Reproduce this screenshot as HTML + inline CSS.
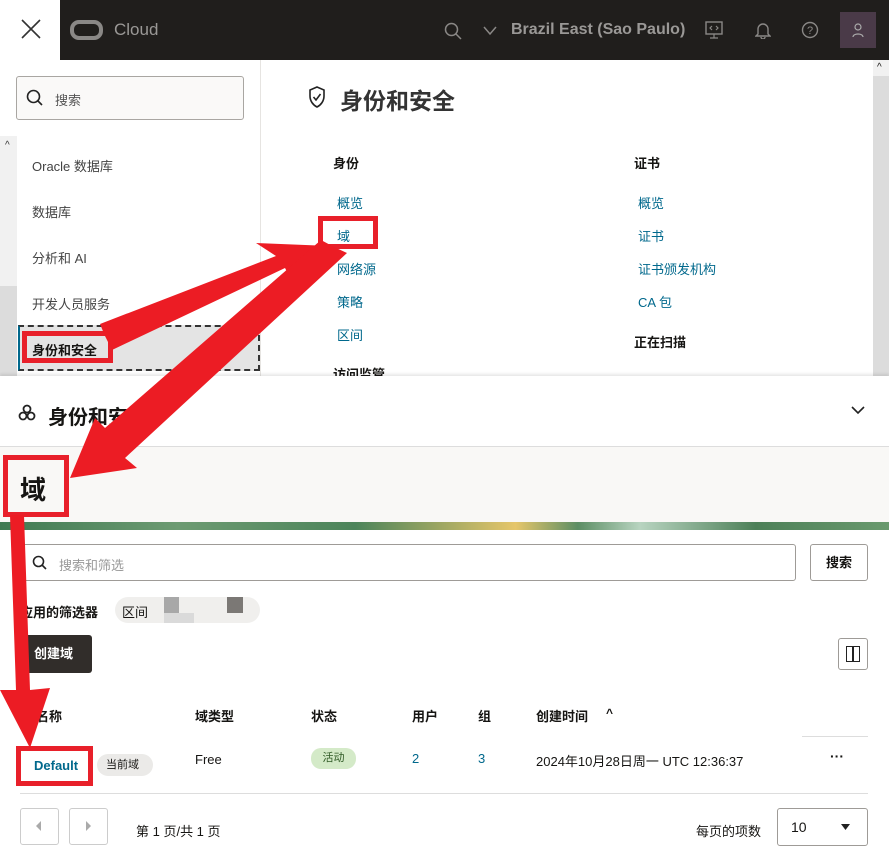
<!DOCTYPE html>
<html><head><meta charset="utf-8"><style>
*{box-sizing:border-box;margin:0;padding:0}
body{width:889px;height:852px;position:relative;overflow:hidden;background:#fff;font-family:"Liberation Sans","Noto Sans CJK SC",sans-serif;color:#161513}
.a{position:absolute;white-space:nowrap}
.link{color:#00688c;font-size:13px}
</style></head><body>
<!-- top bar -->
<div class="a" style="left:0;top:0;width:60px;height:60px;background:#fff"></div>
<svg class="a" style="left:20px;top:18px" width="22" height="22"><path d="M2 2L20 20M20 2L2 20" stroke="#333" stroke-width="1.6"/></svg>
<div class="a" style="left:60px;top:0;width:829px;height:60px;background:#201e1c"></div>
<div class="a" style="left:70px;top:20px;width:33px;height:20px;border:4px solid #8a8886;border-radius:9px"></div>
<div class="a" style="left:114px;top:20px;color:#9a9896;font-size:17px">Cloud</div>
<svg class="a" style="left:444px;top:22px" width="18" height="18"><circle cx="7.5" cy="7.5" r="6" fill="none" stroke="#8a8886" stroke-width="1.5"/><path d="M12 12l5 5" stroke="#8a8886" stroke-width="1.5"/></svg>
<svg class="a" style="left:483px;top:26px" width="14" height="10"><path d="M1 1l6 7 6-7" fill="none" stroke="#8a8886" stroke-width="1.5"/></svg>
<div class="a" style="left:511px;top:21px;color:#9a9896;font-size:16px;font-weight:bold">Brazil East (Sao Paulo)</div>
<svg class="a" style="left:705px;top:21px" width="18" height="18"><rect x="1" y="1" width="16" height="12" fill="none" stroke="#8a8886" stroke-width="1.4"/><path d="M9 13v4M5 17h8M7 5l-2 2 2 2M11 5l2 2-2 2" fill="none" stroke="#8a8886" stroke-width="1.2"/></svg>
<svg class="a" style="left:755px;top:21px" width="16" height="18"><path d="M3 13V8a5 5 0 0110 0v5l2 2H1z M6 16a2 2 0 004 0" fill="none" stroke="#8a8886" stroke-width="1.4"/></svg>
<svg class="a" style="left:801px;top:21px" width="18" height="18"><circle cx="9" cy="9" r="7.5" fill="none" stroke="#8a8886" stroke-width="1.4"/><text x="9" y="13" font-size="11" text-anchor="middle" fill="#8a8886" font-family="Liberation Sans">?</text></svg>
<div class="a" style="left:840px;top:12px;width:36px;height:36px;background:#4a3a48"></div>
<svg class="a" style="left:851px;top:22px" width="14" height="16"><circle cx="7" cy="5" r="3" fill="none" stroke="#aaa" stroke-width="1.2"/><path d="M2 15c0-4 10-4 10 0" fill="none" stroke="#aaa" stroke-width="1.2"/></svg>

<!-- left panel -->
<div class="a" style="left:260px;top:60px;width:1px;height:317px;background:#e6e4e1"></div>
<div class="a" style="left:16px;top:76px;width:228px;height:44px;border:1px solid #a9a6a2;border-radius:3px;background:#faf9f8"></div>
<svg class="a" style="left:26px;top:89px" width="18" height="18"><circle cx="7.5" cy="7.5" r="6" fill="none" stroke="#222" stroke-width="1.6"/><path d="M12 12l4 4" stroke="#222" stroke-width="1.6"/></svg>
<div class="a" style="left:55px;top:90px;font-size:13px;color:#555">搜索</div>
<div class="a" style="left:0;top:136px;width:17px;height:150px;background:#f1f1f1"></div>
<div class="a" style="left:0;top:286px;width:17px;height:90px;background:#dcdcdc"></div>
<div class="a" style="left:5px;top:140px;font-size:10px;color:#333">^</div>
<div class="a" style="left:32px;top:156px;font-size:13px;color:#444">Oracle 数据库</div>
<div class="a" style="left:32px;top:202px;font-size:13px;color:#444">数据库</div>
<div class="a" style="left:32px;top:248px;font-size:13px;color:#444">分析和 AI</div>
<div class="a" style="left:32px;top:294px;font-size:13px;color:#444">开发人员服务</div>
<div class="a" style="left:18px;top:325px;width:242px;height:46px;background:#e4e4e4;border:2px dashed #333;border-left:2px solid #00688c"></div>
<div class="a" style="left:32px;top:340px;font-size:13px;font-weight:bold">身份和安全</div>

<!-- right menu panel -->
<svg class="a" style="left:308px;top:86px" width="18" height="22"><path d="M9 1L2 4v6c0 5 3 9 7 11 4-2 7-6 7-11V4z" fill="none" stroke="#222" stroke-width="1.6"/><path d="M5.5 11l2.5 3 4.5-6" fill="none" stroke="#222" stroke-width="1.6"/></svg>
<div class="a" style="left:340px;top:82px;font-size:23px;font-weight:bold;color:#333">身份和安全</div>
<div class="a" style="left:333px;top:153px;font-size:13px;font-weight:bold">身份</div>
<div class="a link" style="left:337px;top:193px">概览</div>
<div class="a link" style="left:337px;top:226px">域</div>
<div class="a link" style="left:337px;top:259px">网络源</div>
<div class="a link" style="left:337px;top:292px">策略</div>
<div class="a link" style="left:337px;top:325px">区间</div>
<div class="a" style="left:333px;top:364px;font-size:13px;font-weight:bold">访问监管</div>
<div class="a" style="left:634px;top:153px;font-size:13px;font-weight:bold">证书</div>
<div class="a link" style="left:638px;top:193px">概览</div>
<div class="a link" style="left:638px;top:226px">证书</div>
<div class="a link" style="left:638px;top:259px">证书颁发机构</div>
<div class="a link" style="left:638px;top:292px">CA 包</div>
<div class="a" style="left:634px;top:332px;font-size:13px;font-weight:bold">正在扫描</div>
<div class="a" style="left:873px;top:60px;width:16px;height:317px;background:#f1f1f1"></div>
<div class="a" style="left:873px;top:76px;width:16px;height:300px;background:#dcdcdc"></div>
<div class="a" style="left:877px;top:62px;font-size:10px">^</div>

<!-- bottom screenshot -->
<div class="a" style="left:0;top:376px;width:889px;height:476px;background:#fff;box-shadow:0 -2px 3px rgba(0,0,0,.1)"></div>
<svg class="a" style="left:18px;top:404px" width="18" height="18"><circle cx="9" cy="5" r="3.5" fill="none" stroke="#222" stroke-width="1.8"/><circle cx="5" cy="12" r="3.5" fill="none" stroke="#222" stroke-width="1.8"/><circle cx="13" cy="12" r="3.5" fill="none" stroke="#222" stroke-width="1.8"/></svg>
<div class="a" style="left:48px;top:401px;font-size:20px;font-weight:bold">身份和安全</div>
<svg class="a" style="left:851px;top:406px" width="14" height="10"><path d="M1 1l6 6 6-6" fill="none" stroke="#222" stroke-width="1.6"/></svg>
<div class="a" style="left:0;top:446px;width:889px;height:1px;background:#ddd"></div>
<div class="a" style="left:0;top:447px;width:889px;height:75px;background:#f9f8f6"></div>
<div class="a" style="left:20px;top:470px;font-size:26px;font-weight:bold">域</div>
<div class="a" style="left:0;top:522px;width:889px;height:8px;background:linear-gradient(90deg,#3f7a52,#6d9b72 20%,#4c845a 40%,#e6c66a 58%,#5c8e64 65%,#b8d4c0 72%,#4d8058 85%,#6a9a6e)"></div>
<div class="a" style="left:20px;top:544px;width:776px;height:37px;border:1px solid #9e9b97;border-radius:3px"></div>
<svg class="a" style="left:32px;top:555px" width="16" height="16"><circle cx="6.5" cy="6.5" r="5" fill="none" stroke="#222" stroke-width="1.6"/><path d="M10 10l4 4" stroke="#222" stroke-width="1.6"/></svg>
<div class="a" style="left:59px;top:555px;font-size:13px;color:#999">搜索和筛选</div>
<div class="a" style="left:810px;top:544px;width:58px;height:37px;border:1px solid #9e9b97;border-radius:3px;font-size:13px;font-weight:bold;text-align:center;line-height:35px">搜索</div>
<div class="a" style="left:20px;top:602px;font-size:13px;font-weight:bold">应用的筛选器</div>
<div class="a" style="left:115px;top:597px;width:145px;height:26px;border-radius:13px;background:#f0efed"></div>
<div class="a" style="left:122px;top:602px;font-size:13px">区间</div>
<div class="a" style="left:164px;top:597px;width:15px;height:16px;background:#a8a8a8"></div>
<div class="a" style="left:164px;top:613px;width:30px;height:10px;background:#dadada"></div>
<div class="a" style="left:227px;top:597px;width:16px;height:16px;background:#7b7875"></div>
<div class="a" style="left:18px;top:635px;width:74px;height:38px;background:#312d2a;border-radius:3px;color:#fff;font-size:13px;font-weight:bold;line-height:38px;padding-left:16px">创建域</div>
<div class="a" style="left:838px;top:638px;width:30px;height:32px;border:1px solid #9e9b97;border-radius:3px"></div>
<div class="a" style="left:846px;top:646px;width:14px;height:16px;border:1.5px solid #222"></div>
<div class="a" style="left:852px;top:646px;width:1.5px;height:16px;background:#222"></div>
<div class="a" style="left:36px;top:706px;font-size:13px;font-weight:bold">名称</div>
<div class="a" style="left:195px;top:706px;font-size:13px;font-weight:bold">域类型</div>
<div class="a" style="left:311px;top:706px;font-size:13px;font-weight:bold">状态</div>
<div class="a" style="left:412px;top:706px;font-size:13px;font-weight:bold">用户</div>
<div class="a" style="left:478px;top:706px;font-size:13px;font-weight:bold">组</div>
<div class="a" style="left:536px;top:706px;font-size:13px;font-weight:bold">创建时间</div>
<div class="a" style="left:606px;top:706px;font-size:12px;font-weight:bold">^</div>
<div class="a" style="left:802px;top:736px;width:66px;height:1px;background:#ddd"></div>
<div class="a" style="left:34px;top:758px;font-size:13px;font-weight:bold;color:#00688c">Default</div>
<div class="a" style="left:97px;top:754px;width:56px;height:22px;border-radius:11px;background:#ebeae8;font-size:11px;line-height:22px;padding-left:9px">当前域</div>
<div class="a" style="left:195px;top:752px;font-size:13px">Free</div>
<div class="a" style="left:311px;top:748px;width:45px;height:21px;border-radius:10px;background:#d4eac8;font-size:11px;line-height:21px;text-align:center;color:#2f5a25">活动</div>
<div class="a" style="left:412px;top:751px;font-size:13px;color:#00688c">2</div>
<div class="a" style="left:478px;top:751px;font-size:13px;color:#00688c">3</div>
<div class="a" style="left:536px;top:751px;font-size:13px">2024年10月28日周一 UTC 12:36:37</div>
<div class="a" style="left:830px;top:748px;font-size:14px;font-weight:bold">···</div>
<div class="a" style="left:20px;top:793px;width:848px;height:1px;background:#ddd"></div>
<div class="a" style="left:20px;top:808px;width:39px;height:37px;border:1px solid #ccc;border-radius:3px"></div>
<div class="a" style="left:69px;top:808px;width:39px;height:37px;border:1px solid #ccc;border-radius:3px"></div>
<svg class="a" style="left:36px;top:821px" width="6" height="10"><path d="M5 0L0 5l5 5z" fill="#aaa"/></svg>
<svg class="a" style="left:86px;top:821px" width="6" height="10"><path d="M0 0l5 5-5 5z" fill="#aaa"/></svg>
<div class="a" style="left:136px;top:821px;font-size:13px">第 1 页/共 1 页</div>
<div class="a" style="left:696px;top:821px;font-size:13px">每页的项数</div>
<div class="a" style="left:777px;top:808px;width:91px;height:38px;border:1px solid #9e9b97;border-radius:3px"></div>
<div class="a" style="left:791px;top:819px;font-size:14px">10</div>
<svg class="a" style="left:841px;top:824px" width="9" height="6"><path d="M0 0h9L4.5 6z" fill="#222"/></svg>

<!-- red annotation boxes & arrows -->
<div class="a" style="left:318px;top:216px;width:60px;height:33px;border:5px solid #e8202a"></div>
<div class="a" style="left:22px;top:331px;width:91px;height:32px;border:5px solid #e8202a"></div>
<div class="a" style="left:3px;top:455px;width:66px;height:62px;border:5px solid #e8202a"></div>
<div class="a" style="left:16px;top:746px;width:77px;height:40px;border:5px solid #e8202a"></div>
<svg class="a" style="left:0;top:0" width="889" height="852">
<g fill="#ec1c24">
<polygon points="105,336 112,350 285,268 292,281 330,246 256,243 276,256 100,324"/>
<polygon points="334,247 347,253 125,458 137,468 70,478 95,418 105,428 321,240"/>
<polygon points="10,515 24,515 30,690 50,688 30,748 0,690 16,690"/>
</g></svg>
</body></html>
